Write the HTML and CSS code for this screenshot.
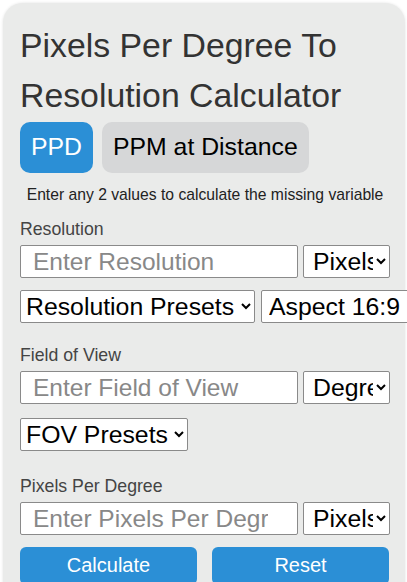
FILE: index.html
```html
<!DOCTYPE html>
<html lang="en">
<head>
    <meta charset="UTF-8">
    <meta name="viewport" content="width=device-width, initial-scale=1.0">
    <title>Pixels Per Degree To Resolution Calculator</title>
    <link rel="stylesheet" href="styles.css">
</head>
<body>
    <div class="card">
        <h1 class="title">Pixels Per Degree To Resolution Calculator</h1>

        <div class="tabs">
            <button class="tab active">PPD</button>
            <button class="tab">PPM at Distance</button>
        </div>

        <p class="hint">Enter any 2 values to calculate the missing variable</p>

        <div class="field">
            <label class="label">Resolution</label>
            <div class="row">
                <input type="text" class="value" placeholder="Enter Resolution">
                <select class="unit">
                    <option>Pixels</option>
                </select>
            </div>
            <div class="row presets">
                <select class="preset">
                    <option>Resolution Presets</option>
                </select>
                <select class="preset aspect">
                    <option>Aspect 16:9</option>
                </select>
            </div>
        </div>

        <div class="field fov">
            <label class="label">Field of View</label>
            <div class="row">
                <input type="text" class="value" placeholder="Enter Field of View">
                <select class="unit">
                    <option>Degrees</option>
                </select>
            </div>
            <div class="row presets">
                <select class="preset">
                    <option>FOV Presets</option>
                </select>
            </div>
        </div>

        <div class="field last">
            <label class="label">Pixels Per Degree</label>
            <div class="row">
                <input type="text" class="value" placeholder="Enter Pixels Per Degree">
                <select class="unit">
                    <option>Pixels/Degree</option>
                </select>
            </div>
        </div>

        <div class="actions">
            <button class="action">Calculate</button>
            <button class="action">Reset</button>
        </div>
    </div>
</body>
</html>
```

FILE: styles.css
```css
* {
    margin: 0;
    padding: 0;
    box-sizing: border-box;
    font-family: "Liberation Sans", Arial, sans-serif;
}

html, body {
    overflow: hidden;
}

body {
    background-color: #fff;
    padding: 3px 2px 0 3px;
}

.card {
    background-color: #eaebea;
    border-radius: 20px;
    padding: 17px 15px 20px 17px;
    box-shadow: 0 0 3px rgba(0, 0, 0, 0.12);
}

.title {
    font-size: 33.8px;
    font-weight: normal;
    line-height: 50px;
    color: #333;
}

.tabs {
    display: flex;
    gap: 9px;
    margin-top: 2px;
}

.tab {
    font-size: 24.8px;
    padding: 11px 11px 12px;
    border: none;
    border-radius: 10px;
    background-color: #d6d7d8;
    color: #000;
    line-height: 28px;
}

.tab.active {
    background-color: #2b8fd6;
    color: #fff;
}

.hint {
    font-size: 15.7px;
    text-align: center;
    color: #222;
    margin: 13px 0 15px;
}

.field {
    margin-bottom: 22px;
}

.field.fov {
    margin-bottom: 25px;
}

.field.fov .presets {
    margin-top: 14px;
}

.field.last {
    margin-bottom: 12px;
}

.label {
    display: block;
    font-size: 17.7px;
    color: #444;
    margin-bottom: 5px;
}

.row {
    display: flex;
    gap: 5px;
}

.presets {
    margin-top: 12px;
    gap: 6px;
}

.value,
.unit,
.preset {
    height: 33px;
    border: 1px solid #8a8a8a;
    border-radius: 2px;
    background-color: #fff;
    color: #000;
}

.value {
    width: 278px;
    padding: 0 29px 0 12px;
    font-size: 24.5px;
}

.value::placeholder {
    color: #888;
}

.unit {
    width: 87px;
    padding-left: 5px;
    font-size: 24.8px;
}

.preset {
    flex-shrink: 0;
    padding: 0 3px 0 1px;
    font-size: 24.8px;
}

.preset.aspect {
    padding: 0 14px 0 3px;
}

.action {
    width: 177px;
    font-size: 20px;
    padding: 7px 0 8px;
    border: none;
    border-radius: 6px;
    background-color: #2b8fd6;
    color: #fff;
}

.actions {
    display: flex;
    gap: 15px;
}
```
